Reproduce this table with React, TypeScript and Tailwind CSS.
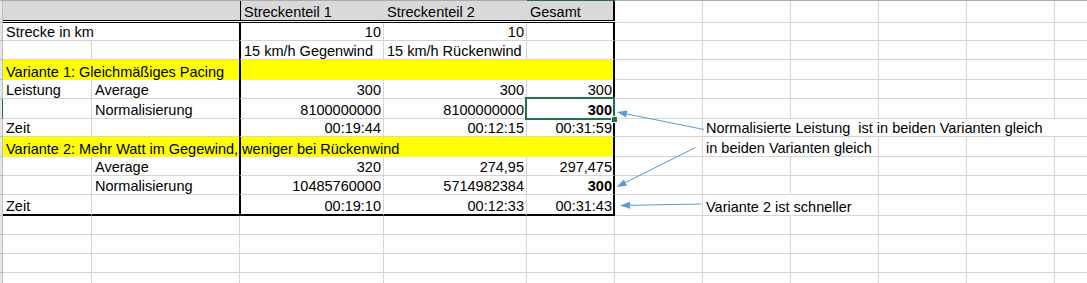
import React from 'react';

const G_RB = 'border-r border-b border-r-[#d4d4d4] border-b-[#d4d4d4]';
const G_B = 'border-b border-b-[#d4d4d4]';
const C_CLS = 'border-l-2 border-r border-b border-l-black border-r-[#d4d4d4] border-b-[#d4d4d4]';
const E_CLS = 'border-r-2 border-b border-r-black border-b-[#d4d4d4]';
const A_LAST = 'border-r border-b-2 border-r-[#d4d4d4] border-b-black';
const B_LAST = 'border-b-2 border-b-black';
const C_LAST = 'border-l-2 border-r border-b-2 border-l-black border-r-[#d4d4d4] border-b-black';
const D_LAST = 'border-r border-b-2 border-r-[#d4d4d4] border-b-black';
const E_LAST = 'border-r-2 border-b-2 border-r-black border-b-black';

const STRIP = 'w-[3px] shrink-0 bg-[#e6e6e6] border-r border-b border-r-[#bdbdbd] border-b-[#bdbdbd]';
const STRIP_SEL = 'w-[3px] shrink-0 bg-[#e6e6e6] border-r border-b border-r-[#217346] border-b-[#bdbdbd]';

type CellProps = {
  w: string;
  children?: React.ReactNode;
  right?: boolean;
  bold?: boolean;
  cls?: string;
  pr?: string;
  extra?: React.ReactNode;
};

function Cell({ w, children, right = false, bold = false, cls = '', pr = 'pr-[2px]', extra }: CellProps) {
  return (
    <div className={`${w} shrink-0 box-border flex items-end ${right ? 'justify-end' : 'justify-start'} ${cls} ${extra ? 'relative' : ''}`}>
      {children !== undefined && (
        <span className={`leading-[16px] whitespace-pre ${right ? pr : 'pl-[3px]'} ${bold ? 'font-bold' : ''}`}>{children}</span>
      )}
      {extra}
    </div>
  );
}

function Tail({ text, hide = [] }: { text?: string; hide?: string[] }) {
  const cols = [
    { k: 'F', w: 'w-[88px]' },
    { k: 'G', w: 'w-[88px]' },
    { k: 'H', w: 'w-[88px]' },
    { k: 'I', w: 'w-[88px]' },
    { k: 'J', w: 'w-[88px]' },
  ];
  return (
    <>
      {cols.map((c) => (
        <Cell key={c.k} w={c.w} cls={hide.includes(c.k) ? G_B : G_RB}>
          {c.k === 'G' ? text : undefined}
        </Cell>
      ))}
      <div className={`flex-1 ${G_B}`} />
    </>
  );
}

function Row({ h, children, sel = false }: { h: string; children: React.ReactNode; sel?: boolean }) {
  return (
    <div className={`flex ${h}`}>
      <div className={sel ? STRIP_SEL : STRIP} />
      {children}
    </div>
  );
}

function YellowRow({ h, text, tail }: { h: string; text: string; tail: React.ReactNode }) {
  return (
    <Row h={h}>
      <div className="flex w-[612px] shrink-0 bg-[#ffff00]">
        <Cell w="w-[89px]">{text}</Cell>
        <div className="w-[147px] shrink-0" />
        <div className="w-[145px] shrink-0 border-l-2 border-l-black" />
        <div className="w-[143px] shrink-0" />
        <div className="w-[88px] shrink-0 border-r-2 border-r-black" />
      </div>
      {tail}
    </Row>
  );
}

function EmptyRow({ h }: { h: string }) {
  return (
    <Row h={h}>
      <Cell w="w-[89px]" cls={G_RB} />
      <Cell w="w-[148px]" cls={G_RB} />
      <Cell w="w-[144px]" cls={G_RB} />
      <Cell w="w-[143px]" cls={G_RB} />
      <Cell w="w-[88px]" cls={G_RB} />
      <Tail />
    </Row>
  );
}

function Arrow({ x1, y1, x2, y2 }: { x1: number; y1: number; x2: number; y2: number }) {
  const dx = x2 - x1;
  const dy = y2 - y1;
  const len = Math.hypot(dx, dy);
  const ux = dx / len;
  const uy = dy / len;
  const L = 10;
  const W = 3.5;
  const bx = x2 - ux * L;
  const by = y2 - uy * L;
  const px = -uy;
  const py = ux;
  return (
    <g>
      <line x1={x1} y1={y1} x2={bx} y2={by} stroke="#5b9bd5" strokeWidth={1} />
      <polygon
        points={`${x2},${y2} ${bx + px * W},${by + py * W} ${bx - px * W},${by - py * W}`}
        fill="#5b9bd5"
      />
    </g>
  );
}

export default function App() {
  const selection = (
    <>
      <div className="absolute left-[-2px] top-[-2px] w-[90px] h-[23px] border-2 border-[#217346] z-10 pointer-events-none" />
      <div className="absolute left-[84px] top-[17px] w-[7px] h-[7px] bg-[#217346] border border-white z-20" />
    </>
  );

  return (
    <div className="relative w-[1087px] h-[283px] overflow-hidden bg-white text-black text-[14.5px] font-['Liberation_Sans',Arial,sans-serif]">
      {/* column header bottom edge */}
      <div className="flex h-px bg-[#ababab]">
        <div className="w-[527px] shrink-0" />
        <div className="w-[88px] shrink-0 bg-[#217346]" />
      </div>

      {/* Row 1: header */}
      <Row h="h-[22px]">
        <div className="flex w-[612px] shrink-0 border-b-[3px] border-double border-b-black bg-clip-padding">
          <Cell w="w-[89px]" cls="bg-[#d9d9d9]" />
          <Cell w="w-[148px]" cls="bg-[#d9d9d9]" />
          <Cell w="w-[144px]" cls="bg-[#d9d9d9] border-l border-l-black">Streckenteil 1</Cell>
          <Cell w="w-[143px]" cls="bg-[#d9d9d9]">Streckenteil 2</Cell>
          <Cell w="w-[88px]" cls="bg-[#d9d9d9] border-r-2 border-r-black">Gesamt</Cell>
        </div>
        <Tail />
      </Row>

      {/* Row 2 */}
      <Row h="h-[18px]">
        <Cell w="w-[89px]" cls={G_B}>Strecke in km</Cell>
        <Cell w="w-[147px]" cls={G_B} />
        <Cell w="w-[145px]" cls={C_CLS} right>10</Cell>
        <Cell w="w-[143px]" cls={G_RB} right>10</Cell>
        <Cell w="w-[88px]" cls={E_CLS} right pr="pr-[1px]" />
        <Tail />
      </Row>

      {/* Row 3 */}
      <Row h="h-[19px]">
        <Cell w="w-[89px]" cls={G_RB} />
        <Cell w="w-[147px]" cls={G_B} />
        <Cell w="w-[145px]" cls={C_CLS}>15 km/h Gegenwind</Cell>
        <Cell w="w-[143px]" cls={G_RB}>15 km/h Rückenwind</Cell>
        <Cell w="w-[88px]" cls={E_CLS} />
        <Tail />
      </Row>

      {/* Row 4 */}
      <YellowRow h="h-[20px]" text="Variante 1: Gleichmäßiges Pacing" tail={<Tail />} />

      {/* Row 5 */}
      <Row h="h-[19px]">
        <Cell w="w-[89px]" cls={G_RB}>Leistung</Cell>
        <Cell w="w-[147px]" cls={G_B}>Average</Cell>
        <Cell w="w-[145px]" cls={C_CLS} right>300</Cell>
        <Cell w="w-[143px]" cls={G_RB} right>300</Cell>
        <Cell w="w-[88px]" cls={E_CLS} right pr="pr-[1px]">300</Cell>
        <Tail />
      </Row>

      {/* Row 6 */}
      <Row h="h-[20px]" sel>
        <Cell w="w-[89px]" cls={G_RB} />
        <Cell w="w-[147px]" cls={G_B}>Normalisierung</Cell>
        <Cell w="w-[145px]" cls={C_CLS} right>8100000000</Cell>
        <Cell w="w-[143px]" cls={G_RB} right>8100000000</Cell>
        <Cell w="w-[88px]" cls={E_CLS} right bold pr="pr-[1px]" extra={selection}>300</Cell>
        <Tail />
      </Row>

      {/* Row 7 */}
      <Row h="h-[18px]">
        <Cell w="w-[89px]" cls={G_RB}>Zeit</Cell>
        <Cell w="w-[147px]" cls={G_B} />
        <Cell w="w-[145px]" cls={C_CLS} right>00:19:44</Cell>
        <Cell w="w-[143px]" cls={G_RB} right>00:12:15</Cell>
        <Cell w="w-[88px]" cls={E_CLS} right pr="pr-[1px]">00:31:59</Cell>
        <Tail text="Normalisierte Leistung  ist in beiden Varianten gleich" hide={['G', 'H', 'I', 'J']} />
      </Row>

      {/* Row 8 */}
      <YellowRow
        h="h-[20px]"
        text="Variante 2: Mehr Watt im Gegewind, weniger bei Rückenwind"
        tail={<Tail text="in beiden Varianten gleich" hide={['G']} />}
      />

      {/* Row 9 */}
      <Row h="h-[19px]">
        <Cell w="w-[89px]" cls={G_RB} />
        <Cell w="w-[147px]" cls={G_B}>Average</Cell>
        <Cell w="w-[145px]" cls={C_CLS} right>320</Cell>
        <Cell w="w-[143px]" cls={G_RB} right>274,95</Cell>
        <Cell w="w-[88px]" cls={E_CLS} right pr="pr-[1px]">297,475</Cell>
        <Tail />
      </Row>

      {/* Row 10 */}
      <Row h="h-[19px]">
        <Cell w="w-[89px]" cls={G_RB} />
        <Cell w="w-[147px]" cls={G_B}>Normalisierung</Cell>
        <Cell w="w-[145px]" cls={C_CLS} right>10485760000</Cell>
        <Cell w="w-[143px]" cls={G_RB} right>5714982384</Cell>
        <Cell w="w-[88px]" cls={E_CLS} right bold pr="pr-[1px]">300</Cell>
        <Tail />
      </Row>

      {/* Row 11 */}
      <Row h="h-[21px]">
        <Cell w="w-[89px]" cls={A_LAST}>Zeit</Cell>
        <Cell w="w-[147px]" cls={B_LAST} />
        <Cell w="w-[145px]" cls={C_LAST} right>00:19:10</Cell>
        <Cell w="w-[143px]" cls={D_LAST} right>00:12:33</Cell>
        <Cell w="w-[88px]" cls={E_LAST} right pr="pr-[1px]">00:31:43</Cell>
        <Tail text="Variante 2 ist schneller" hide={['G']} />
      </Row>

      <EmptyRow h="h-[19px]" />
      <EmptyRow h="h-[19px]" />
      <EmptyRow h="h-[19px]" />
      <EmptyRow h="h-[19px]" />

      <svg className="absolute left-0 top-0 pointer-events-none z-30" width={1087} height={283}>
        <Arrow x1={704} y1={129.5} x2={617} y2={112} />
        <Arrow x1={695.5} y1={147.5} x2={616.5} y2={187} />
        <Arrow x1={701} y1={204} x2={620} y2={205.5} />
      </svg>
    </div>
  );
}
